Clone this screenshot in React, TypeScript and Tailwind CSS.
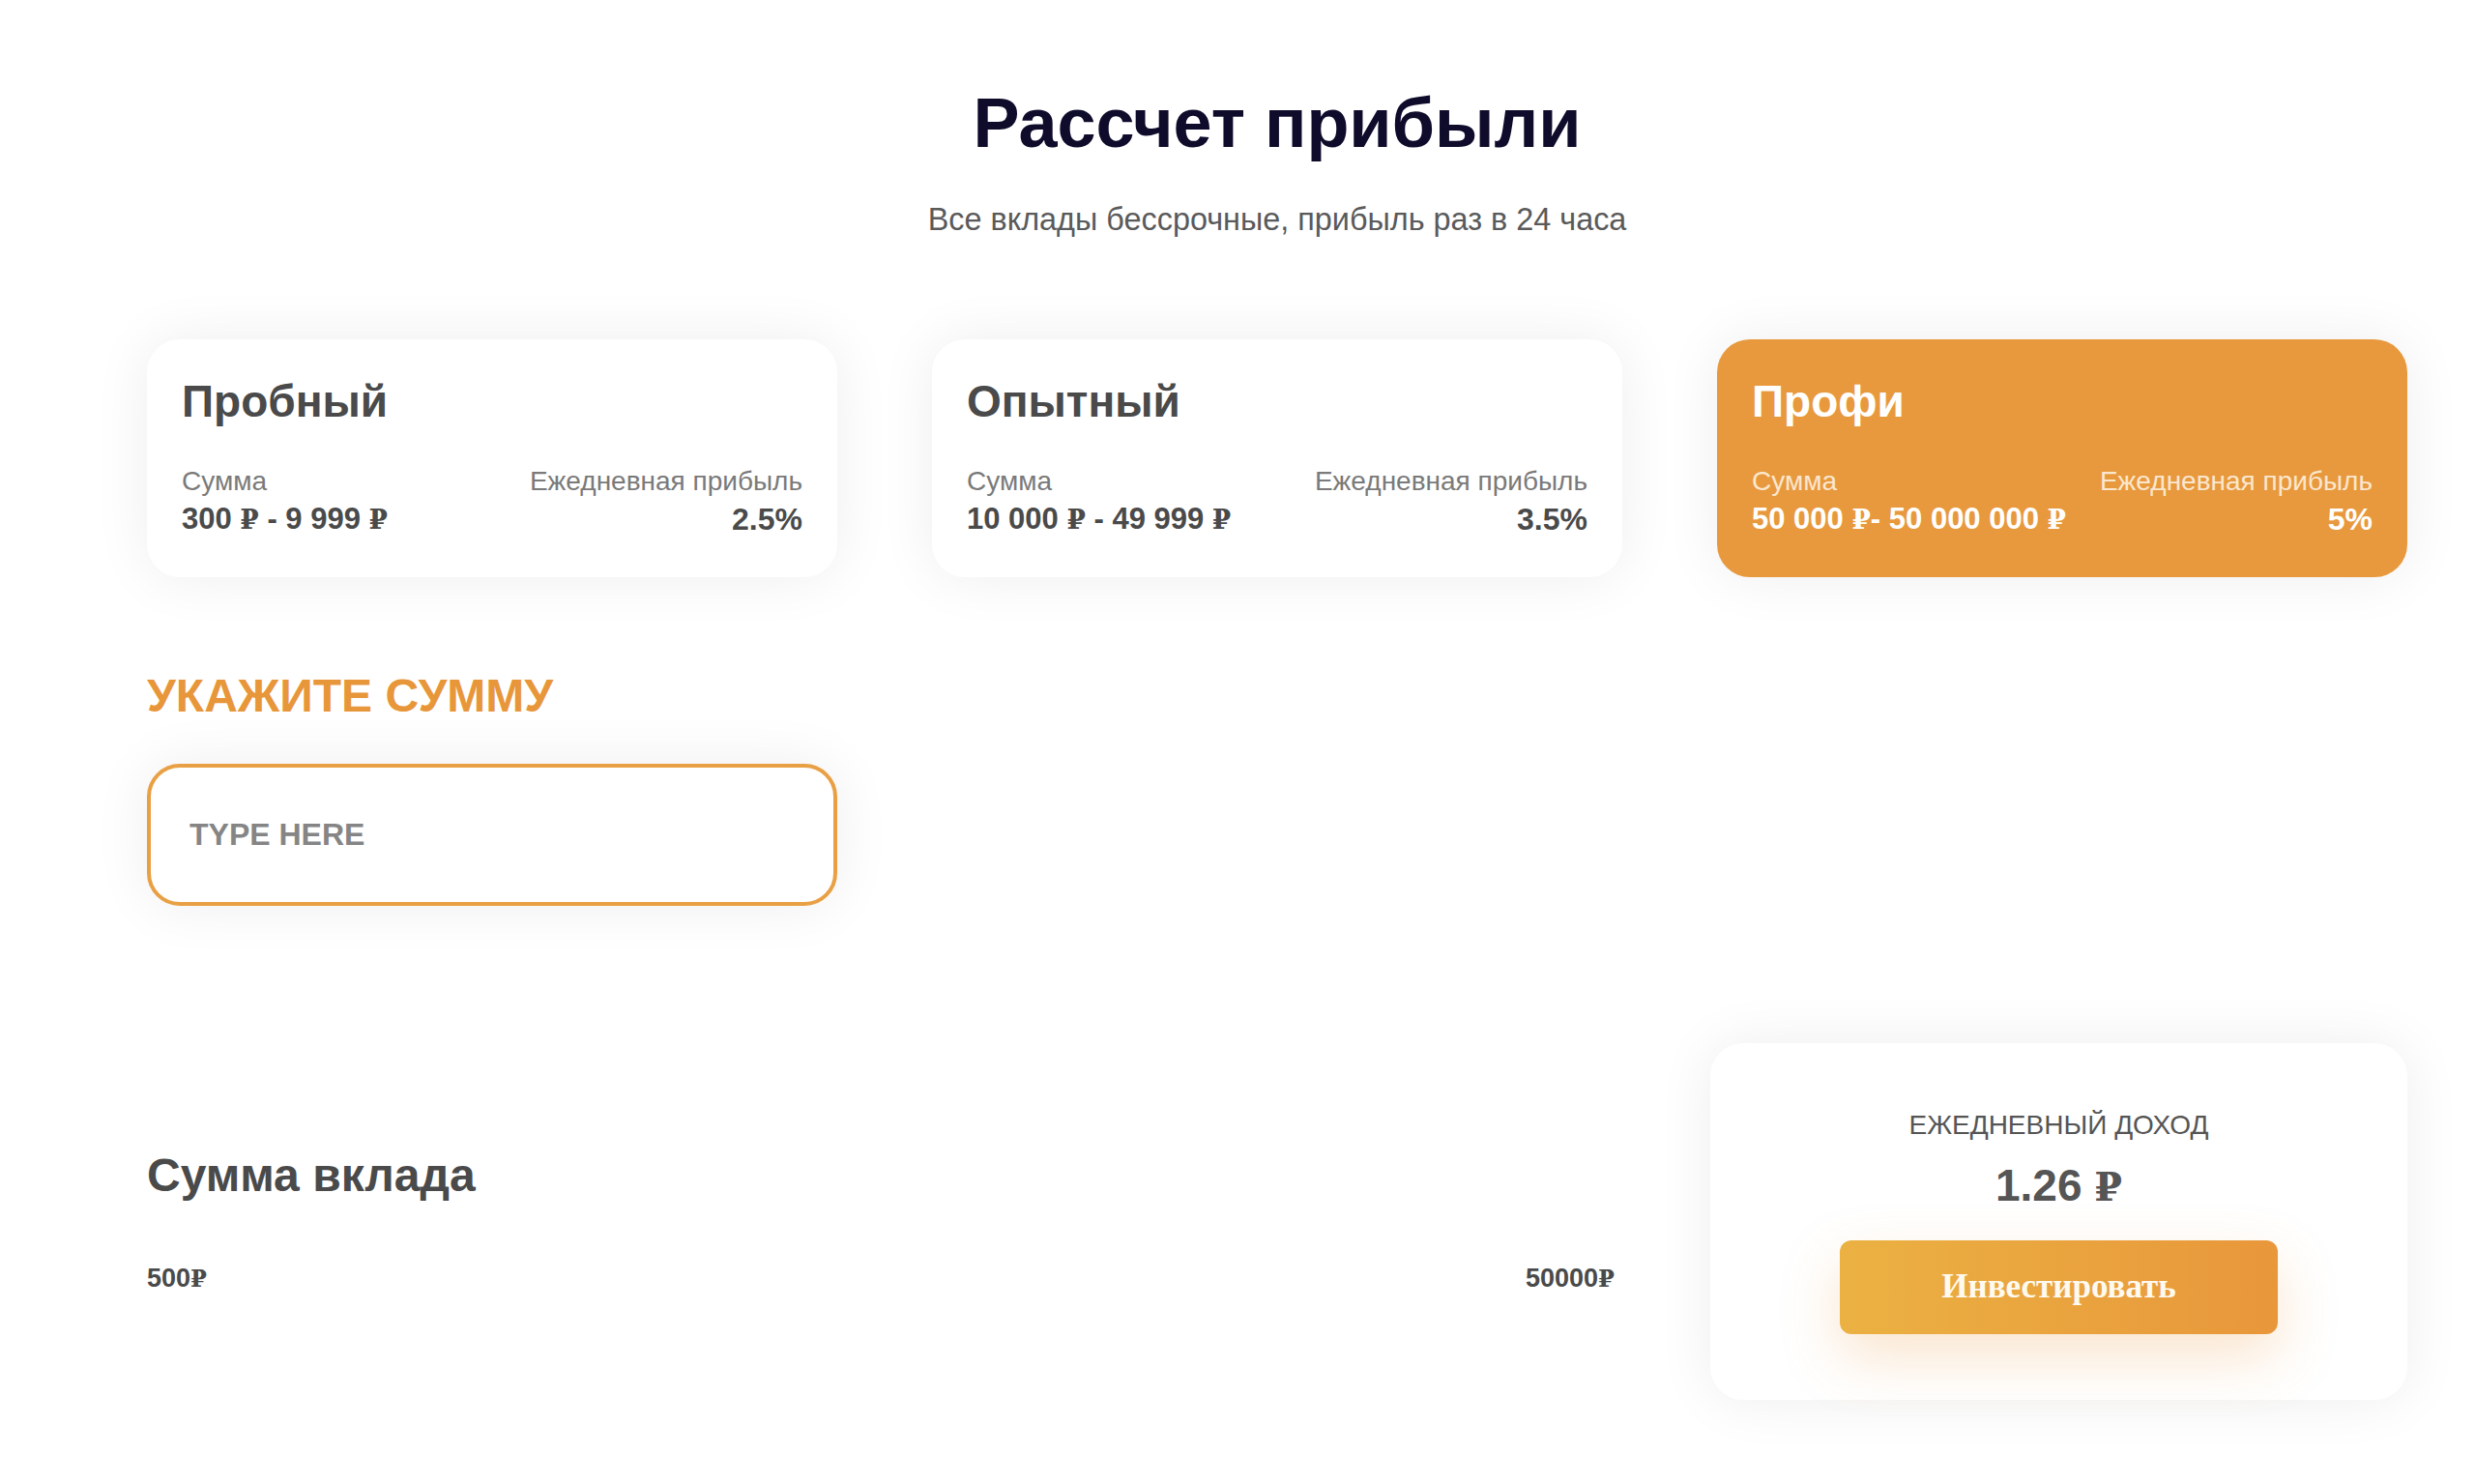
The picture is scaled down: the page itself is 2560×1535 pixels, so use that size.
import { useState } from "react";

const sans = { fontFamily: '"Liberation Sans", Arial, sans-serif' };
const serif = { fontFamily: '"Liberation Serif", "Times New Roman", serif' };
const rubFont = { fontFamily: '"DejaVu Serif", "Liberation Serif", serif' };

const Rub = () => (
    <span className="text-[0.9em]" style={rubFont}>
        ₽
    </span>
);

type Plan = {
    name: string;
    range: React.ReactNode;
    rate: string;
    active?: boolean;
};

const plans: Plan[] = [
    {
        name: "Пробный",
        range: (
            <>
                300 <Rub /> - 9 999 <Rub />
            </>
        ),
        rate: "2.5%",
    },
    {
        name: "Опытный",
        range: (
            <>
                10 000 <Rub /> - 49 999 <Rub />
            </>
        ),
        rate: "3.5%",
    },
    {
        name: "Профи",
        range: (
            <>
                50 000 <Rub />- 50 000 000 <Rub />
            </>
        ),
        rate: "5%",
        active: true,
    },
];

function PlanCard({ plan }: { plan: Plan }) {
    const base = "rounded-[34px] px-[36px] pt-[36px] pb-[39px] shadow-[0_0_60px_rgba(0,0,0,0.07)]";
    return (
        <div className={plan.active ? `${base} bg-[#e8993d] text-white` : `${base} bg-white text-[#4a4a4a]`}>
            <h3 className="text-[46px] leading-[56px] font-bold">{plan.name}</h3>
            <div className="mt-[38px] flex justify-between">
                <div>
                    <div className={plan.active ? "text-[28px] leading-[34px] text-[#fbe7cf]" : "text-[28px] leading-[34px] text-[#7a7a7a]"}>
                        Сумма
                    </div>
                    <div className="mt-[2px] text-[31px] leading-[40px] font-bold">{plan.range}</div>
                </div>
                <div className="text-right">
                    <div className={plan.active ? "text-[28px] leading-[34px] text-[#fbe7cf]" : "text-[28px] leading-[34px] text-[#7a7a7a]"}>
                        Ежедневная прибыль
                    </div>
                    <div className="mt-[2px] text-[32px] leading-[40px] font-bold">{plan.rate}</div>
                </div>
            </div>
        </div>
    );
}

export default function App() {
    const [amount, setAmount] = useState("");

    return (
        <div className="min-h-[1535px] w-full bg-white" style={sans}>
            <div className="pl-[152px] pr-[70px] pt-[84px]">
                <h1 className="text-center text-[72px] leading-[86px] font-bold text-[#0e0b2b]">Рассчет прибыли</h1>
                <p className="mt-[37px] text-center text-[32.4px] leading-[40px] text-[#5a5a5a]">
                    Все вклады бессрочные, прибыль раз в 24 часа
                </p>

                {/* Plans */}
                <div className="mt-[104px] grid grid-cols-3 gap-x-[98px]">
                    {plans.map((p) => (
                        <PlanCard key={p.name} plan={p} />
                    ))}
                </div>

                {/* Amount input */}
                <div className="mt-[95px] grid grid-cols-3 gap-x-[98px]">
                    <div>
                        <h2 className="text-[48px] leading-[56px] font-bold text-[#e8963a]">УКАЖИТЕ СУММУ</h2>
                        <input
                            value={amount}
                            onChange={(e) => setAmount(e.target.value)}
                            placeholder="TYPE HERE"
                            className="mt-[42px] block h-[147px] w-full rounded-[34px] border-[4px] border-[#e9a045] bg-white px-[40px] text-[32px] font-bold text-[#555] outline-none placeholder:text-[#858585] shadow-[0_0_60px_rgba(0,0,0,0.07)]"
                        />
                    </div>
                </div>

                {/* Slider + result */}
                <div className="mt-[142px] grid grid-cols-3 gap-x-[98px] pb-[90px]">
                    <div className="col-span-2 pt-[108px] pr-[8px]">
                        <h2 className="text-[48px] leading-[58px] font-bold text-[#4a4a4a]">Сумма вклада</h2>
                        <div className="mt-[60px] flex justify-between text-[27px] leading-[34px] font-bold text-[#4a4a4a]">
                            <span>
                                500<Rub />
                            </span>
                            <span>
                                50000<Rub />
                            </span>
                        </div>
                    </div>
                    <div className="-ml-[7px] flex flex-col items-center rounded-[34px] bg-white pt-[68px] pb-[68px] shadow-[0_0_60px_rgba(0,0,0,0.07)]">
                        <div className="text-[28px] leading-[34px] text-[#555]">ЕЖЕДНЕВНЫЙ ДОХОД</div>
                        <div className="mt-[17px] text-[46px] leading-[56px] font-bold text-[#555]">
                            1.26 <Rub />
                        </div>
                        <button
                            className="mt-[27px] h-[97px] w-[453px] rounded-[12px] bg-gradient-to-r from-[#ebb142] to-[#e8973b] text-[35px] font-bold text-[#fffaf0] shadow-[0_24px_60px_rgba(236,150,60,0.25)]"
                            style={serif}
                        >
                            Инвестировать
                        </button>
                    </div>
                </div>
            </div>
        </div>
    );
}
